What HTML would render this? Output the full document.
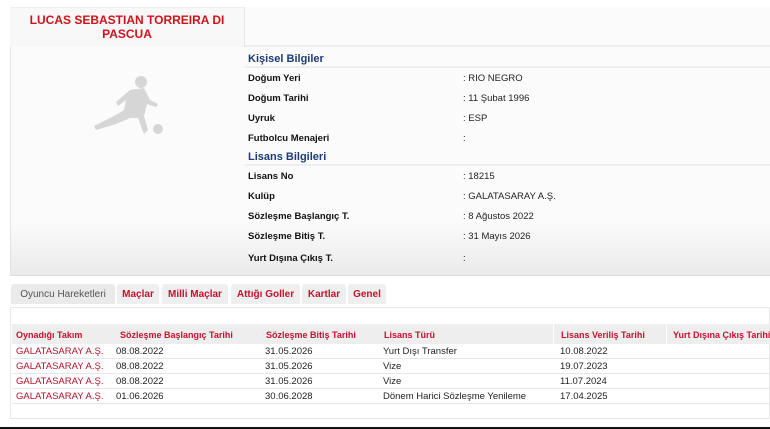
<!DOCTYPE html>
<html><head><meta charset="utf-8"><style>
*{margin:0;padding:0;box-sizing:border-box}
body{width:770px;height:429px;background:#fff;position:relative;overflow:hidden;font-family:"Liberation Sans",sans-serif;}
.a{position:absolute;white-space:nowrap}
.panel{position:absolute;left:10px;top:7px;width:760px;height:269px;background:linear-gradient(#fbfbfb,#fbfbfb 80%,#eaeaea);border-left:1px solid #e4e4e4;border-bottom:1px solid #ddd}
.title{position:absolute;left:10px;top:7px;width:235px;height:40px;background:#f8f8f8;border-right:1px solid #e6e6e6;border-top:1px solid #eee;color:#d0121b;font:bold 12px "Liberation Sans",sans-serif;text-align:center;line-height:14px;padding-top:5px}
.lab{font-size:9.5px;font-weight:bold;color:#111;left:248px}
.val{font-size:9.5px;color:#222;left:463px}
.sec{font:bold 11px "Liberation Sans",sans-serif;color:#1d3a7a;left:248px}
.hl{position:absolute;left:245px;right:0;height:2px;background:#eee}
.tab{position:absolute;top:284px;height:20px;background:#efefef;border-radius:3px 3px 0 0;font-size:10px;font-weight:bold;color:#c8102e;padding:5px 0 0;white-space:nowrap;text-align:center}
.tbl{position:absolute;left:10px;top:307px;width:760px;height:112px;border:1px solid #e8e8e8;background:#fff}
.th{font-size:9px;font-weight:bold;color:#c8102e;top:330px}
.td{font-size:9.5px;color:#222}
.r{color:#b3122a}
.rowl{position:absolute;left:12px;right:0;height:1px;background:#e6e6e6}
</style></head><body>
<div class="panel"></div>
<div class="title">LUCAS SEBASTIAN TORREIRA DI<br>PASCUA</div>
<div class="hl" style="top:45px"></div>
<div class="hl" style="top:66px"></div>
<div class="hl" style="top:164px"></div>
<svg class="a" style="left:92px;top:74px" width="76" height="62" viewBox="0 0 76 62">
<g fill="#d6d6d6"><circle cx="49" cy="8" r="6"/><path d="M38 16 L52 14 L58 26 L66 30 L64 33 L55 30 L52 42 L56 56 L52 60 L46 44 L38 44 L24 50 L4 56 L2 52 L22 42 L32 36 L34 26 L26 32 L24 28 Z"/><circle cx="66" cy="55" r="5"/></g></svg>
<div class="a sec" style="top:53px">Kişisel Bilgiler</div>
<div class="a lab" style="top:73px">Doğum Yeri</div><div class="a val" style="top:73px">:  RIO NEGRO</div>
<div class="a lab" style="top:93px">Doğum Tarihi</div><div class="a val" style="top:93px">:  11 Şubat 1996</div>
<div class="a lab" style="top:113px">Uyruk</div><div class="a val" style="top:113px">:  ESP</div>
<div class="a lab" style="top:133px">Futbolcu Menajeri</div><div class="a val" style="top:133px">:</div>
<div class="a sec" style="top:151px">Lisans Bilgileri</div>
<div class="a lab" style="top:171px">Lisans No</div><div class="a val" style="top:171px">: 18215</div>
<div class="a lab" style="top:191px">Kulüp</div><div class="a val" style="top:191px">: GALATASARAY A.Ş.</div>
<div class="a lab" style="top:211px">Sözleşme Başlangıç T.</div><div class="a val" style="top:211px">: 8 Ağustos 2022</div>
<div class="a lab" style="top:231px">Sözleşme Bitiş T.</div><div class="a val" style="top:231px">: 31 Mayıs 2026</div>
<div class="a lab" style="top:253px">Yurt Dışına Çıkış T.</div><div class="a val" style="top:253px">:</div>

<div class="tab" style="left:11px;width:104px;color:#555;font-weight:normal;background:#eaeaea">Oyuncu Hareketleri</div>
<div class="tab" style="left:117px;width:42px">Maçlar</div>
<div class="tab" style="left:162px;width:66px">Milli Maçlar</div>
<div class="tab" style="left:231px;width:69px">Attığı Goller</div>
<div class="tab" style="left:302px;width:44px">Kartlar</div>
<div class="tab" style="left:348px;width:38px">Genel</div>

<div class="tbl"></div>
<div class="a" style="left:12px;top:324px;width:758px;height:20px;background:#eeeeee"></div>
<div class="a" style="left:553px;top:324px;width:1px;height:20px;background:#fff"></div>
<div class="a" style="left:666px;top:324px;width:1px;height:20px;background:#fff"></div>
<div class="a th" style="left:16px">Oynadığı Takım</div>
<div class="a th" style="left:120px">Sözleşme Başlangıç Tarihi</div>
<div class="a th" style="left:266px">Sözleşme Bitiş Tarihi</div>
<div class="a th" style="left:384px">Lisans Türü</div>
<div class="a th" style="left:561px">Lisans Veriliş Tarihi</div>
<div class="a th" style="left:673px">Yurt Dışına Çıkış Tarihi</div>
<div class="rowl" style="top:358px"></div><div class="rowl" style="top:373px"></div><div class="rowl" style="top:388px"></div><div class="rowl" style="top:403px"></div>
<div class="a td" style="top:346px;left:16px"><span class="r">GALATASARAY A.Ş.</span></div><div class="a td" style="top:346px;left:116px">08.08.2022</div><div class="a td" style="top:346px;left:265px">31.05.2026</div><div class="a td" style="top:346px;left:383px">Yurt Dışı Transfer</div><div class="a td" style="top:346px;left:560px">10.08.2022</div>
<div class="a td" style="top:361px;left:16px"><span class="r">GALATASARAY A.Ş.</span></div><div class="a td" style="top:361px;left:116px">08.08.2022</div><div class="a td" style="top:361px;left:265px">31.05.2026</div><div class="a td" style="top:361px;left:383px">Vize</div><div class="a td" style="top:361px;left:560px">19.07.2023</div>
<div class="a td" style="top:376px;left:16px"><span class="r">GALATASARAY A.Ş.</span></div><div class="a td" style="top:376px;left:116px">08.08.2022</div><div class="a td" style="top:376px;left:265px">31.05.2026</div><div class="a td" style="top:376px;left:383px">Vize</div><div class="a td" style="top:376px;left:560px">11.07.2024</div>
<div class="a td" style="top:391px;left:16px"><span class="r">GALATASARAY A.Ş.</span></div><div class="a td" style="top:391px;left:116px">01.06.2026</div><div class="a td" style="top:391px;left:265px">30.06.2028</div><div class="a td" style="top:391px;left:383px">Dönem Harici Sözleşme Yenileme</div><div class="a td" style="top:391px;left:560px">17.04.2025</div>
<div class="a" style="left:0;top:427px;width:770px;height:2px;background:#111"></div>
</body></html>
